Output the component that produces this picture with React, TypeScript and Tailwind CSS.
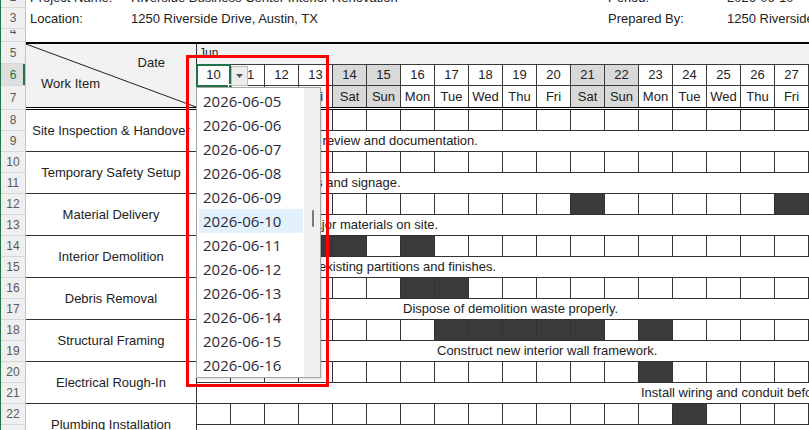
import React from 'react';

const days = [
  { d: 10, w: 'Tue' },
  { d: 11, w: 'Wed' },
  { d: 12, w: 'Thu' },
  { d: 13, w: 'Fri' },
  { d: 14, w: 'Sat', off: true },
  { d: 15, w: 'Sun', off: true },
  { d: 16, w: 'Mon' },
  { d: 17, w: 'Tue' },
  { d: 18, w: 'Wed' },
  { d: 19, w: 'Thu' },
  { d: 20, w: 'Fri' },
  { d: 21, w: 'Sat', off: true },
  { d: 22, w: 'Sun', off: true },
  { d: 23, w: 'Mon' },
  { d: 24, w: 'Tue' },
  { d: 25, w: 'Wed' },
  { d: 26, w: 'Thu' },
  { d: 27, w: 'Fri' },
];

const tasks = [
  { name: 'Site Inspection & Handover', dark: [10, 11], start: 10, note: 'Initial site inspection, review and documentation.' },
  { name: 'Temporary Safety Setup', dark: [10, 11, 12], start: 10, note: 'Set up safety barriers and signage.' },
  { name: 'Material Delivery', dark: [10, 21, 27], start: 10, note: 'Deliver and stage major materials on site.' },
  { name: 'Interior Demolition', dark: [12, 13, 14, 16], start: 12, note: 'Remove existing partitions and finishes.' },
  { name: 'Debris Removal', dark: [16, 17], start: 16, note: 'Dispose of demolition waste properly.' },
  { name: 'Structural Framing', dark: [17, 18, 19, 20, 21, 23], start: 17, note: 'Construct new interior wall framework.' },
  { name: 'Electrical Rough-In', dark: [23], start: 23, note: 'Install wiring and conduit before drywall.' },
  { name: 'Plumbing Installation', dark: [24], start: 24, note: 'Install supply and drain piping lines.' },
];

const rowNums = [
  { n: '2', h: 'h-[21px]' },
  { n: '3', h: 'h-[21px]' },
  { n: '4', h: 'h-[13px]', clip: true },
  { n: '5', h: 'h-[22px]' },
  { n: '6', h: 'h-[22px]', active: true },
  { n: '7', h: 'h-[24px]' },
  ...Array.from({ length: 16 }, (_, i) => ({ n: String(i + 8), h: 'h-[21px]' })),
];

const options = ['05', '06', '07', '08', '09', '10', '11', '12', '13', '14', '15', '16'];

function RowHeaders() {
  return (
    <div className="w-[26px] shrink-0 bg-[#efefef] border-l border-[#217346] border-r border-r-[#c4c4c4] flex flex-col">
      {rowNums.map((r) => (
        <div
          key={r.n}
          className={`${r.h} shrink-0 border-b border-[#d6d6d6] flex items-center justify-center text-[12px] ${
            r.active ? 'bg-[#dedede] text-[#217346] shadow-[inset_-2px_0_0_#217346]' : 'text-[#5a5a5a]'
          }`}
        >
          {r.clip ? (
            <div className="h-[4px] overflow-hidden -mt-[6px]">
              <div className="-mt-[6px] leading-[14px]">{r.n}</div>
            </div>
          ) : (
            r.n
          )}
        </div>
      ))}
    </div>
  );
}

function HeaderBlock() {
  return (
    <div className="h-[68px] shrink-0 flex border-t-2 border-b-[3px] border-double border-t-black border-b-black">
      <div className="w-[171px] shrink-0 bg-[#f2f2f2] border-r border-[#333] relative flex flex-col">
        <svg className="absolute inset-0 w-full h-full" preserveAspectRatio="none" viewBox="0 0 170 63">
          <line x1="0" y1="0" x2="170" y2="63" stroke="#222" strokeWidth="1" />
        </svg>
        <span className="self-end mr-[31px] mt-[11px] leading-[15px]">Date</span>
        <span className="self-start ml-[15px] mt-[6px] leading-[15px]">Work Item</span>
      </div>
      <div className="w-[612px] shrink-0 flex flex-col">
        <div className="h-[20px] bg-[#f2f2f2] pl-[2px] pt-[1px] text-[12px] leading-[16px]">Jun</div>
        <div className="h-[22px] grid grid-cols-[repeat(18,34px)] border-t border-b border-[#3a3a3a]">
          {days.map((x) => (
            <div
              key={x.d}
              className={`border-r border-[#3a3a3a] flex items-center justify-center ${x.off ? 'bg-[#d9d9d9]' : 'bg-white'}`}
            >
              {x.d}
            </div>
          ))}
        </div>
        <div className="h-[21px] grid grid-cols-[repeat(18,34px)]">
          {days.map((x) => (
            <div
              key={x.d}
              className={`border-r border-[#3a3a3a] flex items-center justify-center ${x.off ? 'bg-[#d9d9d9]' : 'bg-white'}`}
            >
              {x.w}
            </div>
          ))}
        </div>
      </div>
    </div>
  );
}

function TaskRow({ task }: { task: (typeof tasks)[number] }) {
  return (
    <div className="h-[42px] shrink-0 flex">
      <div className="w-[171px] shrink-0 border-r border-b border-[#333] flex items-center justify-center whitespace-nowrap">
        {task.name}
      </div>
      <div className="w-[612px] shrink-0 flex flex-col">
        <div className="h-[21px] grid grid-cols-[repeat(18,34px)] border-b border-[#333]">
          {days.map((x) => (
            <div
              key={x.d}
              className={`border-r border-[#333] ${task.dark.includes(x.d) ? 'bg-[#3b3b3b]' : 'bg-white'}`}
            />
          ))}
        </div>
        <div className="h-[21px] grid grid-cols-[repeat(18,34px)] items-center border-b border-[#333]">
          <span
            className="pl-[2px] whitespace-nowrap leading-[18px]"
            style={{ gridColumn: `${task.start - 9} / -1` }}
          >
            {task.note}
          </span>
        </div>
      </div>
    </div>
  );
}

function Dropdown() {
  return (
    <div className="absolute left-[196px] top-[87px] w-[125px] h-[291px] bg-white border border-[#a6a6a6] shadow-[1px_1px_2px_rgba(0,0,0,0.15)] flex font-['Open_Sans','Liberation_Sans',sans-serif] text-[15px] text-[#2a2a3a]">
      <div className="w-[107px] pt-[1px] flex flex-col">
        {options.map((o) => (
          <div
            key={o}
            className={`h-[24px] shrink-0 ml-[2px] w-[104px] pl-[4px] flex items-center ${o === '10' ? 'bg-[#e3f1fc]' : ''}`}
          >
            2026-06-{o}
          </div>
        ))}
      </div>
      <div className="w-[16px] bg-[#f0f0f0] flex flex-col items-center pt-[122px] pl-[2px]">
        <div className="w-[2px] h-[17px] bg-[#7a7a7a] rounded-full" />
      </div>
    </div>
  );
}

export default function App() {
  return (
    <div className="relative w-[809px] h-[430px] overflow-hidden bg-white font-['Liberation_Sans',Arial,sans-serif] text-[13px] text-[#222]">
      <div className="flex -mt-[13px]">
        <RowHeaders />
        <div className="w-[783px] shrink-0 flex flex-col">
          <div className="h-[21px] shrink-0 flex items-center whitespace-nowrap">
            <span className="w-[105px] shrink-0 pl-[4px]">Project Name:</span>
            <span className="w-[477px] shrink-0">Riverside Business Center Interior Renovation</span>
            <span className="w-[119px] shrink-0">Period:</span>
            <span>2026-06-10</span>
          </div>
          <div className="h-[21px] shrink-0 flex items-center whitespace-nowrap">
            <span className="w-[105px] shrink-0 pl-[4px]">Location:</span>
            <span className="w-[477px] shrink-0">1250 Riverside Drive, Austin, TX</span>
            <span className="w-[119px] shrink-0">Prepared By:</span>
            <span>1250 Riverside Drive</span>
          </div>
          <div className="h-[13px] shrink-0" />
          <HeaderBlock />
          {tasks.map((t) => (
            <TaskRow key={t.name} task={t} />
          ))}
        </div>
      </div>

      {/* active cell + list arrow */}
      <div className="absolute left-[196px] top-[64px] w-[35px] h-[23px] border-2 border-[#217346]" />
      <div className="absolute left-[228px] top-[84px] w-[5px] h-[5px] bg-[#217346] border border-white" />
      <div className="absolute left-[231px] top-[66px] w-[17px] h-[20px] bg-[#ededed] border border-[#bcbcbc] flex items-center justify-center">
        <svg width="7" height="4" viewBox="0 0 7 4">
          <path d="M0 0h7L3.5 4z" fill="#555" />
        </svg>
      </div>

      <Dropdown />

      {/* annotation */}
      <div className="absolute left-[186px] top-[55px] w-[143px] h-[332px] border-[3px] border-[#ff0000]" />
    </div>
  );
}
